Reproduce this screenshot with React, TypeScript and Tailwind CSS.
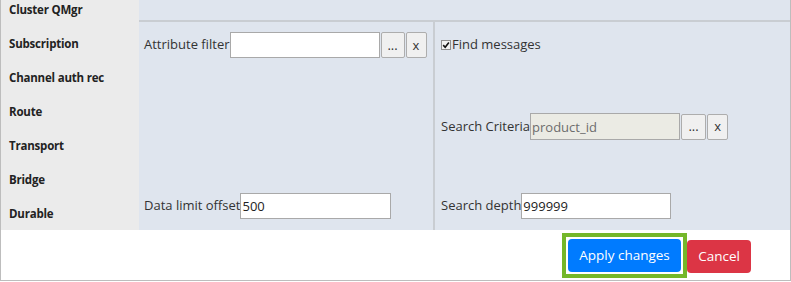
const navItems = [
	"Cluster QMgr",
	"Subscription",
	"Channel auth rec",
	"Route",
	"Transport",
	"Bridge",
	"Durable",
];

const SmallButton = ({ label, width }: { label: string; width: string }) => (
	<button
		className={`${width} h-[26px] ml-px border border-[#adadad] bg-[#f0f0f0] rounded-[2px] text-[13px] text-[#333] leading-none flex items-center justify-center`}
	>
		{label}
	</button>
);

const App = () => {
	return (
		<div className="w-[791px] h-[281px] bg-white border-l border-r border-b border-[#bdbdbd] flex flex-col font-['Open_Sans',sans-serif] text-[#333]">
			<div className="flex h-[230px]">
				{/* side menu */}
				<div className="w-[138px] bg-[#ebebeb] flex flex-col overflow-hidden">
					{navItems.map((item) => (
						<div
							key={item}
							className="shrink-0 h-[34px] flex items-center pl-2 text-[11.5px] font-bold text-[#222] tracking-[-0.2px] first:-mt-[7px]"
						>
							{item}
						</div>
					))}
				</div>

				{/* main panel */}
				<div className="flex-1 bg-[#dfe5ee] flex flex-col">
					<div className="h-[20px]"></div>
					<div className="h-[2px] bg-[#c9cdd2]"></div>
					<div className="flex flex-1">
						<div className="w-[294px] pl-[5px] pt-[10px] flex flex-col">
							<div className="h-[81px] flex items-start">
								<div className="flex items-center text-[13px]">
									<span>Attribute filter</span>
									<input className="w-[150px] h-[26px] border border-[#a9a9a9] bg-white px-0.5 outline-none" />
									<SmallButton label="..." width="w-[24px]" />
									<SmallButton label="x" width="w-[21px]" />
								</div>
							</div>
							<div className="h-[80px]"></div>
							<div className="flex items-center text-[13px]">
								<span>Data limit offset</span>
								<input
									defaultValue="500"
									className="w-[151px] h-[26px] border border-[#a9a9a9] bg-white px-px text-[#222] outline-none"
								/>
							</div>
						</div>
						<div className="w-[2px] bg-[#c9cdd2]"></div>
						<div className="flex-1 pl-[6px] pt-[10px] flex flex-col">
							<div className="h-[81px] flex items-start">
								<label className="flex items-center h-[26px] text-[13px]">
									<span className="w-[10px] h-[10px] border border-[#8f8f8f] bg-[#f2f2f2] flex items-center justify-center mr-px">
										<svg viewBox="0 0 10 10" className="w-[8px] h-[8px]">
											<path d="M1.5 5.2 L4 7.8 L8.6 2" fill="none" stroke="#111" strokeWidth="2" />
										</svg>
									</span>
									<span>Find messages</span>
								</label>
							</div>
							<div className="h-[80px] flex items-start">
								<div className="flex items-center text-[13px]">
									<span>Search Criteria</span>
									<input
										disabled
										defaultValue="product_id"
										className="w-[150px] h-[27px] border border-[#a9a9a9] bg-[#ebebe4] px-px text-[#6d6d6d] outline-none"
									/>
									<SmallButton label="..." width="w-[25px]" />
									<SmallButton label="x" width="w-[21px]" />
								</div>
							</div>
							<div className="flex items-center text-[13px]">
								<span>Search depth</span>
								<input
									defaultValue="999999"
									className="w-[150px] h-[26px] border border-[#a9a9a9] bg-white px-px text-[#222] outline-none"
								/>
							</div>
						</div>
					</div>
				</div>
			</div>

			{/* footer */}
			<div className="flex-1 flex justify-end items-start pt-[3px] pr-[39px]">
				<div className="border-4 border-[#74b72a] p-[2px] bg-white">
					<button className="w-[113px] h-[33px] rounded-[4px] bg-[#007bff] text-white text-[13.5px] block">
						Apply changes
					</button>
				</div>
				<button className="mt-[7px] w-[64px] h-[33px] rounded-[4px] bg-[#dc3545] text-white text-[13.5px]">
					Cancel
				</button>
			</div>
		</div>
	);
};

export default App;
